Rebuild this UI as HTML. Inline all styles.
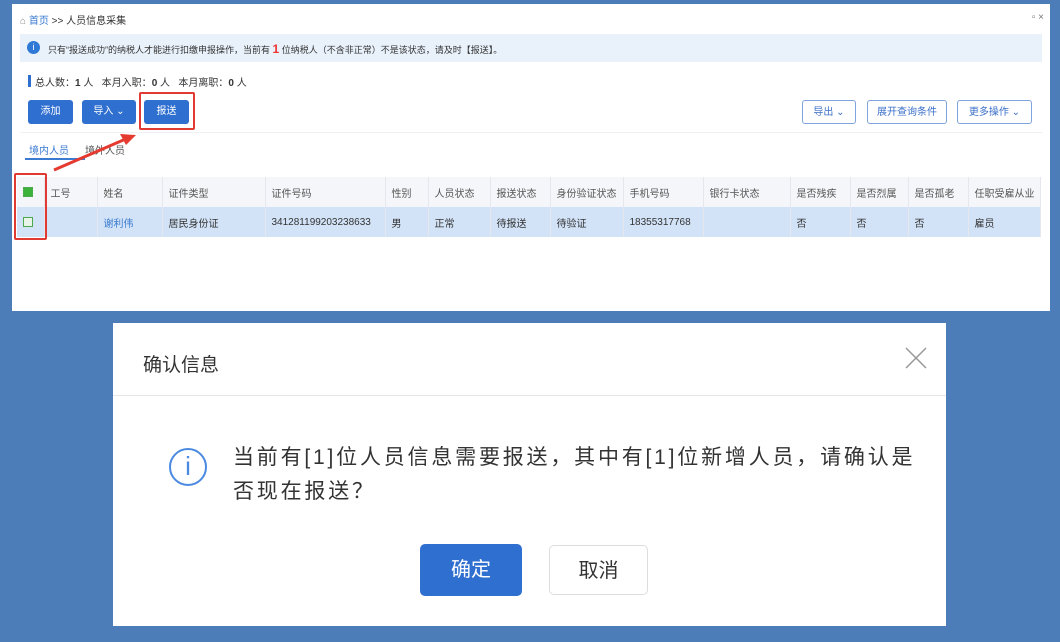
<!DOCTYPE html>
<html><head><meta charset="utf-8"><style>
*{box-sizing:border-box;margin:0;padding:0}
body{width:1060px;height:642px;background:#4c7db9;position:relative;overflow:hidden;font-family:"Liberation Sans","Noto Sans CJK SC",sans-serif;color:#333}
.a{position:absolute}
.panel{left:12px;top:4px;width:1038px;height:307px;background:#fff}
.t{font-size:10px;white-space:nowrap}
.btn{position:absolute;height:24px;border-radius:3px;font-size:10px;line-height:24px;text-align:center}
.pb{background:#2f6fd0;color:#fff}
.ob{border:1px solid #7fa3dd;color:#3a6fc8;background:#fff}
table{border-collapse:collapse;position:absolute;left:17px;top:177px;font-size:10px}
td{height:30px;border-right:1px solid #e4e8ee;padding-left:6px;white-space:nowrap;overflow:hidden}
tr.h td{background:#f4f6f9;color:#555}
tr.r td{background:#d2e3f7}
.red{position:absolute;border:2px solid #e03a33;border-radius:2px}
.cb{display:inline-block;width:10px;height:10px;border:1px solid #4caa4c;vertical-align:middle}
</style></head><body>
<div class="a panel">
  <div class="a t" style="left:8px;top:8px;color:#888">⌂ <span style="color:#3a7ad0">首页</span> <span style="color:#333">&gt;&gt; 人员信息采集</span></div>
  <div class="a t" style="right:6px;top:8px;color:#777">▫ ×</div>
  <div class="a" style="left:8px;top:30px;width:1022px;height:28px;background:#e9f2fb"></div>
  <div class="a" style="left:15px;top:37px;width:13px;height:13px;border-radius:50%;background:#2f79d6;color:#fff;font-size:9px;text-align:center;line-height:13px">i</div>
  <div class="a t" style="left:36px;top:38px;font-size:9px">只有“报送成功”的纳税人才能进行扣缴申报操作，当前有 <b style="color:#e33;font-size:12px">1</b> 位纳税人（不含非正常）不是该状态，请及时【报送】。</div>
  <div class="a" style="left:16px;top:71px;width:3px;height:12px;background:#2f6fd0"></div>
  <div class="a t" style="left:23px;top:70px">总人数：<b>1</b> 人 &nbsp; 本月入职：<b>0</b> 人 &nbsp; 本月离职：<b>0</b> 人</div>
  <div class="btn pb" style="left:16px;top:96px;width:45px">添加</div>
  <div class="btn pb" style="left:70px;top:96px;width:54px">导入 ⌄</div>
  <div class="btn pb" style="left:132px;top:96px;width:45px">报送</div>
  <div class="btn ob" style="left:790px;top:96px;width:54px">导出 ⌄</div>
  <div class="btn ob" style="left:855px;top:96px;width:80px">展开查询条件</div>
  <div class="btn ob" style="left:945px;top:96px;width:75px">更多操作 ⌄</div>
  <div class="a" style="left:8px;top:128px;width:1022px;height:1px;background:#eef0f3"></div>
  <div class="a t" style="left:17px;top:138px;color:#3a7ad0">境内人员</div>
  <div class="a" style="left:13px;top:154px;width:60px;height:2px;background:#3a7ad0"></div>
  <div class="a t" style="left:73px;top:138px;color:#555">境外人员</div>
</div>
<table>
<tr class="h"><td style="width:27px"><span class="cb" style="background:#3bb33b"></span></td><td style="width:53px">工号</td><td style="width:65px">姓名</td><td style="width:103px">证件类型</td><td style="width:120px">证件号码</td><td style="width:43px">性别</td><td style="width:62px">人员状态</td><td style="width:60px">报送状态</td><td style="width:73px">身份验证状态</td><td style="width:80px">手机号码</td><td style="width:87px">银行卡状态</td><td style="width:60px">是否残疾</td><td style="width:58px">是否烈属</td><td style="width:60px">是否孤老</td><td style="width:72px">任职受雇从业</td></tr>
<tr class="r"><td><span class="cb" style="background:#e8f4e8"></span></td><td></td><td style="color:#3a7ad0">谢利伟</td><td>居民身份证</td><td>341281199203238633</td><td>男</td><td>正常</td><td>待报送</td><td>待验证</td><td>18355317768</td><td></td><td>否</td><td>否</td><td>否</td><td>雇员</td></tr>
</table>
<div class="red" style="left:139px;top:92px;width:56px;height:38px"></div>
<div class="red" style="left:14px;top:173px;width:33px;height:67px"></div>
<svg class="a" style="left:50px;top:130px" width="90" height="45"><line x1="4" y1="40" x2="78" y2="8" stroke="#e53a30" stroke-width="3"/><polygon points="86,5 70,4 76,15" fill="#e53a30"/></svg>
<div class="a" style="left:113px;top:323px;width:833px;height:303px;background:#fff">
  <div class="a" style="left:30px;top:27px;font-size:19px;color:#333">确认信息</div>
  <svg class="a" style="left:792px;top:24px" width="22" height="22"><path d="M1 1L21 21M21 1L1 21" stroke="#999" stroke-width="1.5"/></svg>
  <div class="a" style="left:0;top:72px;width:833px;height:1px;background:#e6e6e6"></div>
  <div class="a" style="left:56px;top:125px;width:38px;height:38px;border:2px solid #4a8ae0;border-radius:50%;color:#4a8ae0;font-size:26px;text-align:center;line-height:33px">i</div>
  <div class="a" style="left:120px;top:118px;width:720px;font-size:21px;line-height:34px;color:#333;white-space:nowrap;letter-spacing:2.8px">当前有[1]位人员信息需要报送，其中有[1]位新增人员，请确认是<br>否现在报送？</div>
  <div class="btn pb" style="left:307px;top:221px;width:102px;height:52px;line-height:52px;font-size:20px;border-radius:5px">确定</div>
  <div class="btn" style="left:436px;top:222px;width:99px;height:50px;line-height:50px;font-size:20px;border:1px solid #ddd;border-radius:5px;color:#333">取消</div>
</div>
</body></html>
